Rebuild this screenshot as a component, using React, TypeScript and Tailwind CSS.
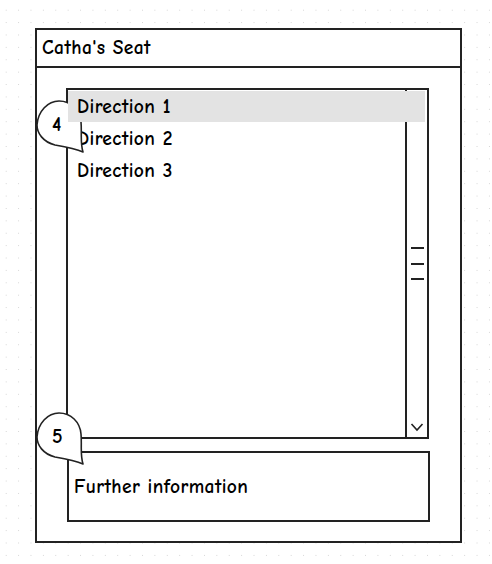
const sketchFont = { fontFamily: '"Comic Sans MS", "Comic Neue", "Open Sans", sans-serif' };

function Callout({ n, className }: { n: string; className: string }) {
  return (
    <div className={`absolute w-[48px] h-[53px] ${className}`}>
      <svg width="48" height="53" viewBox="0 0 48 53" className="absolute inset-0">
        <path
          d="M47 52 C40 49 30 47 19 45 C7 42 1 33 1 25 C2 11 12 1 23 1 C35 1 44 10 45 22 C46 33 44 43 47 52 Z"
          fill="white"
          stroke="#222"
          strokeWidth="1.6"
          strokeLinejoin="round"
        />
      </svg>
      <span className="absolute left-[16px] top-[15px] text-[20px] leading-none font-bold text-black">{n}</span>
    </div>
  );
}

export default function App() {
  const rows = ['Direction 1', 'Direction 2', 'Direction 3'];
  const text = 'text-[19.5px] font-bold tracking-[0.4px] text-black';

  return (
    <div
      className="relative w-[492px] h-[564px] bg-white bg-[radial-gradient(#d4d4d4_0.8px,transparent_0.9px)] bg-[size:12.4px_12.4px] bg-[position:0px_4px] pt-[28px] pl-[35px]"
      style={sketchFont}
    >
      <div className="w-[427px] h-[515px] border-2 border-[#222] bg-white flex flex-col">
        <div className={`h-[38px] border-b-2 border-[#222] flex items-center pl-[5px] ${text}`}>
          Catha's Seat
        </div>

        <div className="ml-[29px] mt-[20px] w-[363px] h-[351px] border-2 border-[#222] flex">
          <div className="flex-1 flex flex-col pt-[1px]">
            {rows.map((r, i) => (
              <div
                key={r}
                className={
                  i === 0
                    ? `relative z-10 w-[calc(100%+20px)] h-[31px] mb-[1px] bg-[#e3e3e3] flex items-center pl-[9px] ${text}`
                    : `h-[32px] flex items-center pl-[9px] ${text}`
                }
              >
                {r}
              </div>
            ))}
          </div>
          <div className="w-[22px] border-l-2 border-[#222] flex flex-col items-center">
            <div className="mt-[157px] flex flex-col gap-[13.5px]">
              <div className="w-[13px] h-[2px] bg-[#222]" />
              <div className="w-[13px] h-[2px] bg-[#222]" />
              <div className="w-[13px] h-[2px] bg-[#222]" />
            </div>
            <svg width="14" height="10" viewBox="0 0 14 10" className="mt-auto mb-[5px]">
              <path d="M1.5 2 L7 8 L12.5 2" fill="none" stroke="#222" strokeWidth="1.6" />
            </svg>
          </div>
        </div>

        <div className={`ml-[30px] mt-[12px] w-[363px] h-[71px] border-2 border-[#222] flex items-center pl-[5px] ${text}`}>
          Further information
        </div>
      </div>

      <Callout n="4" className="left-[36px] top-[100px]" />
      <Callout n="5" className="left-[36px] top-[412px]" />
    </div>
  );
}
